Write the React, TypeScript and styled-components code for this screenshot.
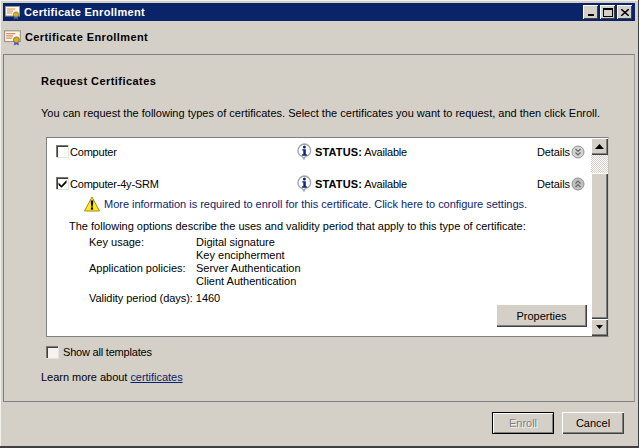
import * as React from 'react'
import styled, { createGlobalStyle } from 'styled-components'

const GlobalStyle = createGlobalStyle`
  html, body {
    margin: 0;
    padding: 0;
    background: #d4d0c8;
  }
  * {
    box-sizing: border-box;
  }
`

const Window = styled.div`
  width: 639px;
  height: 448px;
  padding: 3px;
  display: flex;
  flex-direction: column;
  background: #d4d0c8;
  border-right: 1px solid #404040;
  border-bottom: 2px solid #404040;
  box-shadow: inset 1px 1px 0 #f2f0ea;
  font-family: "Liberation Sans", Arial, sans-serif;
  font-size: 11px;
  color: #000;
`

const TitleBar = styled.div`
  height: 18px;
  flex: none;
  display: flex;
  align-items: center;
  background: #0a246a;
  color: #fff;
  font-weight: bold;
  padding: 0 3px 0 2px;
`

const TitleText = styled.span`
  flex: 1;
  margin-left: 3px;
  letter-spacing: 0.3px;
`

const CaptionButton = styled.div`
  width: 15px;
  height: 14px;
  margin-left: 2px;
  display: flex;
  align-items: center;
  justify-content: center;
  background: #d4d0c8;
  box-shadow: inset 1px 1px 0 #fff, inset -1px -1px 0 #404040;
`

const Header = styled.div`
  height: 33px;
  flex: none;
  display: flex;
  align-items: center;
  gap: 3px;
  padding: 0 0 2px 1px;
  font-weight: bold;
  letter-spacing: 0.4px;
`

const Panel = styled.div`
  width: 632px;
  height: 348px;
  flex: none;
  border: 1px solid #808080;
  border-right-color: #9a9a94;
  padding: 19px 0 0 37px;
  display: flex;
  flex-direction: column;
`

const SectionTitle = styled.div`
  font-weight: bold;
  line-height: 14px;
  letter-spacing: 0.45px;
`

const Intro = styled.div`
  margin-top: 18px;
  line-height: 14px;
  letter-spacing: 0.01px;
  white-space: nowrap;
`

const ListBox = styled.div`
  margin-top: 17px;
  margin-left: 5px;
  width: 563px;
  height: 200px;
  flex: none;
  display: flex;
  background: #fff;
  border: 1px solid #c8c4bc;
  border-top-color: #808080;
  border-left-color: #808080;
  border-bottom-color: #808080;
`

const ListContent = styled.div`
  flex: 1;
  padding: 5px 0 0 9px;
  display: flex;
  flex-direction: column;
`

const CertRow = styled.div<{ $top?: number }>`
  display: grid;
  grid-template-columns: 240px 241px 1fr;
  align-items: center;
  height: 14px;
  margin-top: ${({ $top }) => $top ?? 0}px;
`

const CheckLabel = styled.label`
  display: flex;
  align-items: center;
  gap: 1px;
  letter-spacing: -0.2px;
`

const CheckBox = styled.span<{ $light?: boolean }>`
  width: 13px;
  height: 13px;
  flex: none;
  display: flex;
  align-items: center;
  justify-content: center;
  background: ${({ $light }) => ($light ? '#f4f3ef' : '#fff')};
  box-shadow: inset 1px 1px 0 #7b7872, inset 2px 2px 0 #3f3f3f;
  border-right: 1px solid #e4e2dc;
  border-bottom: 1px solid #e4e2dc;
`

const Status = styled.div`
  display: flex;
  align-items: center;
  gap: 2px;
  letter-spacing: -0.2px;
`

const StatusKey = styled.b`
  font-weight: bold;
  letter-spacing: 0.15px;
`

const DetailsToggle = styled.div`
  display: flex;
  align-items: center;
  gap: 1px;
  letter-spacing: -0.1px;
`

const Warning = styled.div`
  display: flex;
  align-items: center;
  gap: 4px;
  height: 18px;
  margin-top: 6px;
  margin-left: 28px;
  color: #0a246a;
  letter-spacing: -0.02px;
`

const OptionsText = styled.div`
  margin-top: 6px;
  margin-left: 13px;
  line-height: 14px;
`

const OptionsGrid = styled.div`
  display: grid;
  grid-template-columns: 107px 1fr;
  grid-auto-rows: 13px;
  margin-top: 3px;
  margin-left: 33px;
  line-height: 13px;
`

const Validity = styled.div`
  margin-top: 4px;
  margin-left: 33px;
  line-height: 12px;
  letter-spacing: -0.05px;
`

const RightAligned = styled.div`
  display: flex;
  justify-content: flex-end;
  padding-right: 4px;
`

const RaisedButton = styled.button<{ $w: number; $h?: number; $disabled?: boolean; $default?: boolean }>`
  width: ${({ $w }) => $w}px;
  height: ${({ $h }) => $h ?? 22}px;
  padding: 0;
  border: none;
  background: #d4d0c8;
  font: inherit;
  color: ${({ $disabled }) => ($disabled ? '#808080' : '#000')};
  text-shadow: ${({ $disabled }) => ($disabled ? '1px 1px 0 #f4f3ef' : 'none')};
  box-shadow: ${({ $default }) =>
    $default
      ? 'inset 0 0 0 1px #000, inset 2px 2px 0 #fff, inset -2px -2px 0 #808080'
      : 'inset 1px 1px 0 #fff, inset -1px -1px 0 #404040, inset -2px -2px 0 #808080'};
`

const ScrollBar = styled.div`
  width: 17px;
  flex: none;
  display: flex;
  flex-direction: column;
`

const ScrollArrow = styled.div`
  height: 17px;
  flex: none;
  display: flex;
  align-items: center;
  justify-content: center;
  background: #d4d0c8;
  box-shadow: inset 1px 1px 0 #fff, inset -1px -1px 0 #404040, inset -2px -2px 0 #808080;
`

const ScrollTrack = styled.div`
  height: 18px;
  flex: none;
  background: repeating-conic-gradient(#fff 0 25%, #d4d0c8 0 50%) 0 0 / 2px 2px;
`

const ScrollThumb = styled.div`
  flex: 1;
  background: #d4d0c8;
  box-shadow: inset 1px 1px 0 #fff, inset -1px -1px 0 #404040, inset -2px -2px 0 #808080;
`

const ShowAll = styled(CheckLabel)`
  margin-top: 9px;
  margin-left: 5px;
  gap: 4px;
  line-height: 13px;
`

const LearnMore = styled.div`
  margin-top: 11px;
  line-height: 14px;
  letter-spacing: -0.03px;
`

const Link = styled.a`
  color: #0a246a;
  text-decoration: underline;
`

const Footer = styled.div`
  flex: 1;
  display: flex;
  justify-content: flex-end;
  gap: 8px;
  padding: 10px 11px 0 0;
`

const CertificateIcon = ({ size }: { size: number }) => (
  <svg width={size} height={size} viewBox="0 0 16 16">
    <rect x="0.5" y="2.5" width="14" height="9.5" fill="#fbf6e6" stroke="#9a9484" />
    <path d="M2 5h8M2 7h6M2 9h5" stroke="#d88a6a" strokeWidth="1" />
    <path d="M9.5 11.5l-.8 4 2.3-1 2.3 1-.8-4z" fill="#3a5cc0" />
    <circle cx="11" cy="10.5" r="2.6" fill="#d8b030" stroke="#8a6a10" strokeWidth="0.7" />
  </svg>
)

const InfoIcon = () => (
  <svg width="17" height="17" viewBox="0 0 17 17">
    <path
      d="M8.5 1A6.6 6.6 0 0 0 2 7.5c0 2.8 1.8 5 4.2 5.9L8 16l1.4-2.6c3-.6 5.2-3 5.2-5.9A6.4 6.4 0 0 0 8.5 1z"
      fill="#fff"
      stroke="#a0a4ae"
      strokeWidth="1.3"
    />
    <circle cx="8.4" cy="3.9" r="1.5" fill="#14246e" />
    <path d="M6.2 6.2h3.6v5h1.1v1.5H6.1v-1.5h1.2V7.6H6.2z" fill="#14246e" />
  </svg>
)

const WarningIcon = () => (
  <svg width="16" height="16" viewBox="0 0 16 16">
    <path d="M8 1L15.5 15H.5z" fill="#ffe81c" stroke="#a88c10" strokeLinejoin="round" />
    <path d="M6.7 4.6h2.6l-.6 6.2H7.3z" fill="#000" />
    <rect x="6.9" y="11.4" width="2.2" height="2.2" fill="#000" />
  </svg>
)

const ChevronCircle = ({ up }: { up?: boolean }) => (
  <svg width="14" height="14" viewBox="0 0 14 14">
    <circle cx="7" cy="7" r="6" fill={up ? '#c0c0c0' : '#d4d4d4'} stroke="#909090" />
    <path
      d={up ? 'M4.5 6.5L7 4l2.5 2.5M4.5 10L7 7.5 9.5 10' : 'M4.5 4L7 6.5 9.5 4M4.5 7.5L7 10l2.5-2.5'}
      fill="none"
      stroke="#666"
      strokeWidth="1.2"
    />
  </svg>
)

const Triangle = ({ down }: { down?: boolean }) => (
  <svg width="9" height="5" viewBox="0 0 9 5">
    <path d={down ? 'M1 0h7L4.5 4z' : 'M4.5 0L9 5H0z'} fill="#000" />
  </svg>
)

const CertificateRow = ({ name, checked, top }: { name: string; checked?: boolean; top?: number }) => (
  <CertRow $top={top}>
    <CheckLabel>
      <CheckBox>
        {checked && (
          <svg width="9" height="9" viewBox="0 0 9 9">
            <path d="M0.5 3.5l3 3L8.5 1v2.8L3.5 8.8 0.5 6z" fill="#000" />
          </svg>
        )}
      </CheckBox>
      {name}
    </CheckLabel>
    <Status>
      <InfoIcon />
      <span>
        <StatusKey>STATUS:</StatusKey> Available
      </span>
    </Status>
    <DetailsToggle>
      Details
      <ChevronCircle up={checked} />
    </DetailsToggle>
  </CertRow>
)

export default function App() {
  return (
    <Window>
      <GlobalStyle />
      <TitleBar>
        <CertificateIcon size={16} />
        <TitleText>Certificate Enrollment</TitleText>
        <CaptionButton>
          <svg width="8" height="8" viewBox="0 0 8 8">
            <rect x="1" y="6" width="6" height="2" fill="#000" />
          </svg>
        </CaptionButton>
        <CaptionButton>
          <svg width="10" height="9" viewBox="0 0 10 9">
            <path d="M0 0h10v9H0zM1 2v6h8V2z" fill="#000" fillRule="evenodd" />
          </svg>
        </CaptionButton>
        <CaptionButton>
          <svg width="8" height="7" viewBox="0 0 8 7">
            <path d="M0 0l8 7M8 0L0 7" stroke="#000" strokeWidth="1.5" />
          </svg>
        </CaptionButton>
      </TitleBar>
      <Header>
        <CertificateIcon size={18} />
        Certificate Enrollment
      </Header>
      <Panel>
        <SectionTitle>Request Certificates</SectionTitle>
        <Intro>
          You can request the following types of certificates. Select the certificates you want to request, and then
          click Enroll.
        </Intro>
        <ListBox>
          <ListContent>
            <CertificateRow name="Computer" />
            <CertificateRow name="Computer-4y-SRM" checked top={18} />
            <Warning>
              <WarningIcon />
              More information is required to enroll for this certificate. Click here to configure settings.
            </Warning>
            <OptionsText>The following options describe the uses and validity period that apply to this type of certificate:</OptionsText>
            <OptionsGrid>
              <span>Key usage:</span>
              <span>Digital signature</span>
              <span />
              <span>Key encipherment</span>
              <span>Application policies:</span>
              <span>Server Authentication</span>
              <span />
              <span>Client Authentication</span>
            </OptionsGrid>
            <Validity>Validity period (days): 1460</Validity>
            <RightAligned>
              <RaisedButton $w={91} $h={23}>Properties</RaisedButton>
            </RightAligned>
          </ListContent>
          <ScrollBar>
            <ScrollArrow>
              <Triangle />
            </ScrollArrow>
            <ScrollTrack />
            <ScrollThumb />
            <ScrollArrow>
              <Triangle down />
            </ScrollArrow>
          </ScrollBar>
        </ListBox>
        <ShowAll>
          <CheckBox $light />
          Show all templates
        </ShowAll>
        <LearnMore>
          Learn more about <Link>certificates</Link>
        </LearnMore>
      </Panel>
      <Footer>
        <RaisedButton $w={62} $disabled $default>
          Enroll
        </RaisedButton>
        <RaisedButton $w={62}>Cancel</RaisedButton>
      </Footer>
    </Window>
  )
}
